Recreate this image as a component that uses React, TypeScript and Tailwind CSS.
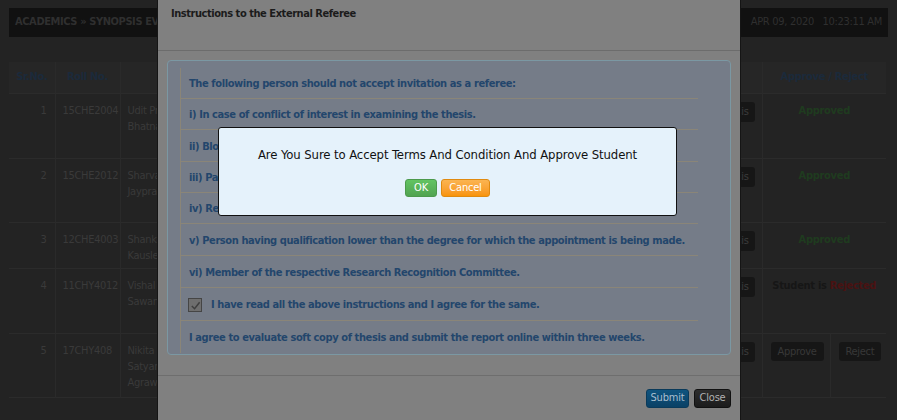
import React from 'react';

const rows = [
  { sr: 1, roll: '15CHE2004', name: ['Udit Prakash', 'Bhatnagar'], h: 'h-[65px]', status: 'approved' },
  { sr: 2, roll: '15CHE2012', name: ['Sharvari', 'Jayprakash'], h: 'h-[64px]', status: 'approved' },
  { sr: 3, roll: '12CHE4003', name: ['Shankar', 'Kausley'], h: 'h-[46px]', status: 'approved' },
  { sr: 4, roll: '11CHY4012', name: ['Vishal V.', 'Sawant'], h: 'h-[65px]', status: 'rejected' },
  { sr: 5, roll: '17CHY408', name: ['Nikita', 'Satyanarayan', 'Agrawal'], h: 'h-[64px]', status: 'pending' },
];

const rules = [
  { text: 'The following person should not accept invitation as a referee:', h: 'h-[31px]' },
  { text: 'i) In case of conflict of interest in examining the thesis.', h: 'h-[31px]' },
  { text: 'ii) Blood relative or close relative of the candidate.', h: 'h-[32px]' },
  { text: 'iii) Past or present supervisor of the candidate.', h: 'h-[31px]' },
  { text: 'iv) Retired faculty member of the University.', h: 'h-[31px]' },
  { text: 'v) Person having qualification lower than the degree for which the appointment is being made.', h: 'h-[32px]' },
  { text: 'vi) Member of the respective Research Recognition Committee.', h: 'h-[32px]' },
];

function StatusCell({ status }: { status: string }) {
  if (status === 'approved')
    return (
      <td colSpan={2} className="border-l border-[#2a2a2a] pt-[9px] text-center align-top font-bold text-[#1f3b1f]">
        Approved
      </td>
    );
  if (status === 'rejected')
    return (
      <td colSpan={2} className="border-l border-[#2a2a2a] pt-[9px] text-center align-top font-bold text-[#161616]">
        Student is <span className="text-[#4a1212]">Rejected</span>
      </td>
    );
  return (
    <>
      <td className="border-l border-[#2a2a2a] pt-[10px] pl-[8px] align-top">
        <span className="rounded-[3px] bg-[#161616] px-[7px] py-[3px] text-[#383838]">Approve</span>
      </td>
      <td className="border-l border-[#2a2a2a] pt-[10px] pl-[8px] align-top">
        <span className="rounded-[3px] bg-[#161616] px-[7px] py-[3px] text-[#383838]">Reject</span>
      </td>
    </>
  );
}

export default function App() {
  return (
    <div className="relative h-[420px] w-[897px] overflow-hidden bg-[#232323] font-['DejaVu_Sans_Condensed','DejaVu_Sans',sans-serif] text-[11px] [font-stretch:condensed]">
      <div className="px-[9px] pt-[8px]">
        <div className="flex h-[29px] items-center justify-between bg-[#111111] px-[6px]">
          <span className="text-[11px] font-bold tracking-[-0.4px] text-[#2f2f2f]">ACADEMICS » SYNOPSIS EVALUATION</span>
          <span className="text-[11px] tracking-[-0.3px] text-[#2f2f2f]">APR 09, 2020&nbsp;&nbsp; 10:23:11 AM</span>
        </div>

        <table className="mt-[25px] w-[877px] table-fixed border-collapse tracking-[-0.3px]">
          <colgroup>
            <col className="w-[46px]" />
            <col className="w-[65px]" />
            <col className="w-[200px]" />
            <col className="w-[200px]" />
            <col className="w-[110px]" />
            <col className="w-[132px]" />
            <col className="w-[68px]" />
            <col className="w-[56px]" />
          </colgroup>
          <thead>
            <tr className="h-[31px] bg-[#262626] font-bold text-[#1b2a3b]">
              <th className="text-center">Sr.No.</th>
              <th className="border-l border-[#2a2a2a] text-center">Roll No.</th>
              <th className="border-l border-[#2a2a2a] text-center">Student Name</th>
              <th className="border-l border-[#2a2a2a] text-center">Supervisor</th>
              <th className="border-l border-[#2a2a2a] text-center">Date</th>
              <th className="border-l border-[#2a2a2a] text-center">Thesis</th>
              <th colSpan={2} className="border-l border-[#2a2a2a] text-center">Approve / Reject</th>
            </tr>
          </thead>
          <tbody className="text-[#3a3a3a]">
            {rows.map((r) => (
              <tr key={r.sr} className={`${r.h} border-y border-[#2b2b2b]`}>
                <td className="pt-[9px] pr-[8px] text-right align-top">{r.sr}</td>
                <td className="border-l border-[#2a2a2a] pt-[9px] pl-[7px] align-top">{r.roll}</td>
                <td className="border-l border-[#2a2a2a] pt-[9px] pl-[7px] align-top leading-[16px]">
                  {r.name.map((n) => (
                    <div key={n}>{n}</div>
                  ))}
                </td>
                <td className="border-l border-[#2a2a2a] pt-[9px] pl-[7px] align-top">Dr. Supervisor</td>
                <td className="border-l border-[#2a2a2a] pt-[9px] pl-[7px] align-top">09-04-2020</td>
                <td className="border-l border-[#2a2a2a] pt-[8px] pr-[7px] text-right align-top">
                  <span className="inline-block rounded-[3px] bg-[#161616] px-[6px] py-[2px] text-[#3c3c3c]">View Thesis</span>
                </td>
                <StatusCell status={r.status} />
              </tr>
            ))}
          </tbody>
        </table>
      </div>

      {/* instructions modal */}
      <div className="absolute top-0 left-[157px] flex h-[430px] w-[584px] flex-col border-x border-[#151515] bg-[#808080]">
        <div className="h-[51px] border-b border-[#6c6c6c] px-[13px] pt-[6px] text-[11px] font-bold tracking-[-0.45px] text-[#1b1b1b]">
          Instructions to the External Referee
        </div>
        <div className="px-[9px] pt-[9px] pb-[20px]">
          <div className="h-[295px] rounded-[4px] border border-[#7b98a3] bg-[#757c88] pt-[7px] pl-[12px]">
            <div className="w-[518px] border-l border-[#8a8578] font-bold tracking-[-0.4px] text-[#23466c]">
              {rules.map((r) => (
                <div key={r.text} className={`${r.h} flex items-center border-b border-[#8a8578] pt-[3px] pl-[8px]`}>
                  {r.text}
                </div>
              ))}
              <div className="flex h-[33px] items-center gap-[9px] border-b border-[#8a8578] pt-[2px] pl-[7px]">
                <span className="flex h-[14px] w-[14px] items-center justify-center border border-[#454545] bg-[#6e6e6e]">
                  <svg viewBox="0 0 12 12" className="h-[11px] w-[11px]">
                    <path d="M2 6.5 L5 9.5 L10.5 2.5" fill="none" stroke="#3e3e3e" strokeWidth="1.6" />
                  </svg>
                </span>
                I have read all the above instructions and I agree for the same.
              </div>
              <div className="flex h-[32px] items-center pt-[2px] pl-[8px]">
                I agree to evaluate soft copy of thesis and submit the report online within three weeks.
              </div>
            </div>
          </div>
        </div>
        <div className="flex justify-end gap-[5px] border-t border-[#6e6e6e] px-[9px] pt-[13px] tracking-[-0.2px]">
          <button className="h-[19px] w-[43px] rounded-[3px] border border-[#0a3a5a] bg-gradient-to-b from-[#0f547f] to-[#0a4166] text-[11px] text-[#a9bfd0]">
            Submit
          </button>
          <button className="h-[19px] w-[37px] rounded-[3px] border border-[#111111] bg-gradient-to-b from-[#2e2e2e] to-[#1c1c1c] text-[11px] text-[#b2b2b2]">
            Close
          </button>
        </div>
      </div>

      {/* confirm dialog */}
      <div className="absolute top-[127px] left-[218px] flex h-[89px] w-[459px] flex-col items-center rounded-[3px] border border-[#111111] bg-[#e5f2fb] pt-[19px]">
        <p className="text-[13px] leading-[16px] tracking-[-0.1px] text-[#111111]">
          Are You Sure to Accept Terms And Condition And Approve Student
        </p>
        <div className="mt-[16px] flex gap-[4px] text-[11px] tracking-[-0.2px] text-white">
          <button className="h-[18px] w-[32px] rounded-[3px] border border-[#4c9a4c] bg-gradient-to-b from-[#62c462] to-[#51a351]">
            OK
          </button>
          <button className="h-[18px] w-[49px] rounded-[3px] border border-[#e08a10] bg-gradient-to-b from-[#fbb450] to-[#f89406]">
            Cancel
          </button>
        </div>
      </div>
    </div>
  );
}
